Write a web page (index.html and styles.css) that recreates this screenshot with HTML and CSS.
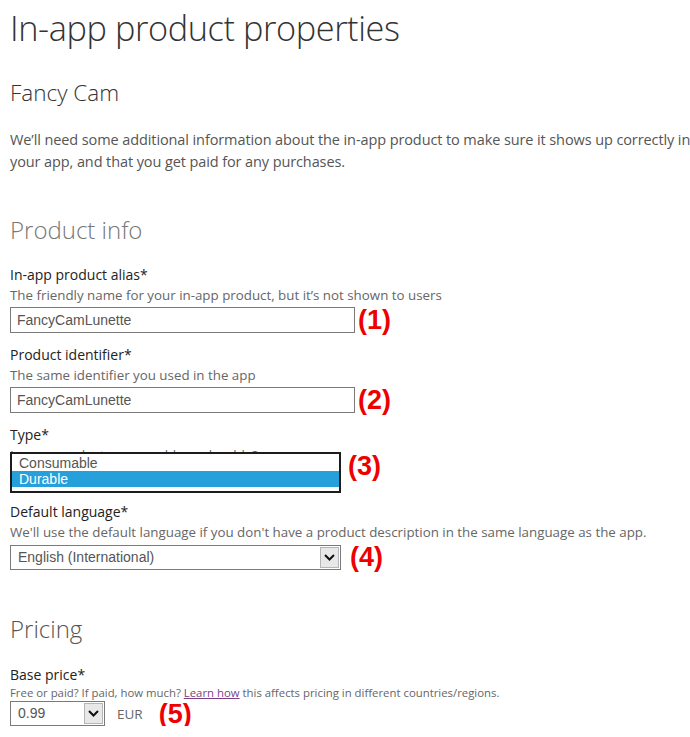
FILE: index.html
```html
<!DOCTYPE html>
<html>
<head>
<meta charset="utf-8">
<link rel="stylesheet" href="styles.css">
</head>
<body>
<div class="page">
  <h1 class="title">In-app product properties</h1>
  <h2 class="app-name">Fancy Cam</h2>
  <p class="intro">We’ll need some additional information about the in-app product to make sure it shows up correctly in your app, and that you get paid for any purchases.</p>

  <h2 class="section section-info">Product info</h2>

  <div class="field">
    <div class="label">In-app product alias*</div>
    <div class="desc">The friendly name for your in-app product, but it’s not shown to users</div>
    <div class="row">
      <div class="textbox">FancyCamLunette</div>
      <span class="marker">(1)</span>
    </div>
  </div>

  <div class="field">
    <div class="label">Product identifier*</div>
    <div class="desc">The same identifier you used in the app</div>
    <div class="row">
      <div class="textbox">FancyCamLunette</div>
      <span class="marker">(2)</span>
    </div>
  </div>

  <div class="field">
    <div class="label">Type*</div>
    <div class="desc desc-hidden">Is your product consumable or durable?</div>
    <div class="row row-type">
      <div class="listbox">
        <div class="option">Consumable</div>
        <div class="option selected">Durable</div>
      </div>
      <span class="marker marker-type">(3)</span>
    </div>
  </div>

  <div class="field">
    <div class="label">Default language*</div>
    <div class="desc">We'll use the default language if you don't have a product description in the same language as the app.</div>
    <div class="row">
      <div class="select select-lang">
        <span class="select-value">English (International)</span>
        <span class="select-arrow"><svg width="11" height="7" viewBox="0 0 11 7"><path d="M1 1 L5.5 5.5 L10 1" fill="none" stroke="#111" stroke-width="2"/></svg></span>
      </div>
      <span class="marker marker-lang">(4)</span>
    </div>
  </div>

  <h2 class="section section-pricing">Pricing</h2>

  <div class="field">
    <div class="label">Base price*</div>
    <div class="desc desc-small">Free or paid? If paid, how much? <a class="link" href="#">Learn how</a> this affects pricing in different countries/regions.</div>
    <div class="row row-price">
      <div class="select select-price">
        <span class="select-value">0.99</span>
        <span class="select-arrow"><svg width="11" height="7" viewBox="0 0 11 7"><path d="M1 1 L5.5 5.5 L10 1" fill="none" stroke="#111" stroke-width="2"/></svg></span>
      </div>
      <span class="currency">EUR</span>
      <span class="marker marker-price">(5)</span>
    </div>
  </div>
</div>
</body>
</html>
```

FILE: styles.css
```css
html, body {
  margin: 0;
  padding: 0;
  background: #ffffff;
}

.page {
  padding: 0 0 0 10px;
  font-family: "Segoe UI", "Open Sans", "Noto Sans", sans-serif;
  color: #222;
}

.title {
  margin: 0;
  padding-top: 4px;
  font-weight: 300;
  font-size: 34.3px;
  line-height: 48px;
  color: #333;
  letter-spacing: -0.4px;
}

.app-name {
  margin: 25px 0 0;
  font-weight: 300;
  font-size: 22.5px;
  line-height: 32px;
  color: #333;
}

.intro {
  margin: 20px 0 0;
  font-size: 14.5px;
  line-height: 22px;
  color: #555;
  width: 690px;
  letter-spacing: -0.1px;
}

.section {
  margin: 0;
  font-weight: 300;
  font-size: 24px;
  line-height: 32px;
}

.section-info {
  margin-top: 41px;
  color: #777;
}

.section-pricing {
  margin-top: 43px;
  color: #555;
}

.field {
  margin-top: 12px;
}

.section-info + .field {
  margin-top: 19px;
}

.section-pricing + .field {
  margin-top: 20px;
}

.label {
  font-size: 14px;
  line-height: 20px;
  color: #222;
}

.desc {
  font-size: 13.33px;
  line-height: 20px;
  margin-bottom: 2px;
  color: #666;
  white-space: nowrap;
}

.desc-hidden {
  height: 7px;
  overflow: hidden;
  margin-bottom: 14px;
}

.desc-small {
  font-size: 11.36px;
  line-height: 16px;
  margin-bottom: 0;
}

.link {
  color: #7b3f85;
  text-decoration: underline;
}

.row {
  display: flex;
  align-items: center;
  height: 26px;
}

.textbox {
  box-sizing: border-box;
  width: 345px;
  height: 26px;
  border: 1px solid #7a7a7a;
  padding: 0 6px;
  font-family: "Liberation Sans", Arial, sans-serif;
  font-size: 14px;
  line-height: 24px;
  color: #555;
}

.marker {
  margin-left: 3px;
  font-family: "Liberation Sans", Arial, sans-serif;
  font-weight: bold;
  font-size: 27px;
  line-height: 26px;
  color: #ee0000;
}

.row-type {
  position: relative;
  height: 24px;
}

.listbox {
  position: absolute;
  left: 0;
  top: -14px;
  box-sizing: border-box;
  width: 331px;
  height: 41px;
  border: 2px solid #1c1c1c;
  background: #fff;
  padding-top: 1px;
  font-family: "Liberation Sans", Arial, sans-serif;
  font-size: 14px;
}

.option {
  height: 16px;
  line-height: 16px;
  padding-left: 7px;
  color: #555;
}

.option.selected {
  background: #26a0da;
  color: #fff;
}

.marker-type {
  position: absolute;
  left: 335px;
  top: -13px;
}

.select {
  box-sizing: border-box;
  display: flex;
  height: 25px;
  border: 1px solid #7a7a7a;
  background: #fff;
  font-family: "Liberation Sans", Arial, sans-serif;
  font-size: 14px;
  color: #555;
}

.select-lang {
  width: 331px;
}

.select-price {
  width: 95px;
}

.select-value {
  flex: 1;
  padding-left: 7px;
  line-height: 23px;
}

.select-arrow {
  box-sizing: border-box;
  width: 19px;
  margin: 1px;
  background: #e8e8e8;
  border: 1px solid #b5b5b5;
  display: flex;
  align-items: center;
  justify-content: center;
}

.marker-lang {
  margin-left: 9px;
}

.row-price {
  height: 25px;
}

.currency {
  margin-left: 12px;
  font-size: 13.5px;
  color: #666;
}

.marker-price {
  margin-left: 16px;
}
```
